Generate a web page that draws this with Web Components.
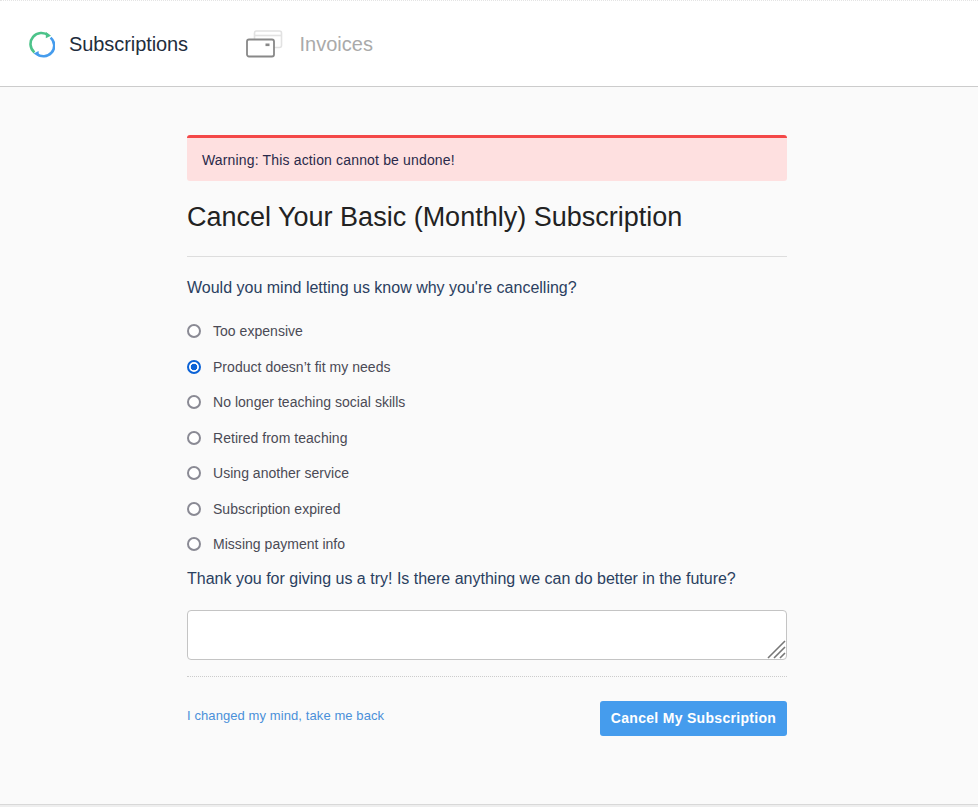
<!DOCTYPE html>
<html>
<head>
<meta charset="utf-8">
<style>
  html, body { margin: 0; padding: 0; }
  body { background: #fafafa; font-family: "Liberation Sans", Arial, sans-serif; }
</style>
</head>
<body>
<app-header>
  <nav-tab active>
    <svg slot="icon" width="26" height="27" viewBox="0 0 26 27" fill="none" stroke-width="2.6">
      <path d="M5.4 21.4A10.4 10.4 0 0 1 19.6 4.6" stroke="#4cc38a"/>
      <path d="M17 1 22 4.7 16.8 7.2Z" fill="#4cc38a" stroke="none"/>
      <path d="M21.6 6.6A10.4 10.4 0 0 1 7.4 22.6" stroke="#459ced"/>
      <path d="M9.8 25.8 4.6 22.4 9.6 20Z" fill="#459ced" stroke="none"/>
    </svg>
    Subscriptions
  </nav-tab>
  <nav-tab>
    <svg slot="icon" width="38" height="28" viewBox="0 0 38 28" fill="none">
      <rect x="8.5" y="1" width="27" height="16.5" rx="2" stroke="#e2e2e2" stroke-width="1.6" fill="#fff"/>
      <path d="M9 5.5h26" stroke="#e2e2e2" stroke-width="1.6"/>
      <rect x="1" y="9.5" width="27" height="17" rx="2" stroke="#888" stroke-width="1.8" fill="#fff"/>
      <rect x="19.5" y="13.5" width="4" height="2.6" fill="#888"/>
    </svg>
    Invoices
  </nav-tab>
</app-header>
<cancel-form>
  <warning-alert>Warning: This action cannot be undone!</warning-alert>
  <form-title>Cancel Your Basic (Monthly) Subscription</form-title>
  <form-question>Would you mind letting us know why you're cancelling?</form-question>
  <reason-list>
    <reason-option>Too expensive</reason-option>
    <reason-option checked>Product doesn’t fit my needs</reason-option>
    <reason-option>No longer teaching social skills</reason-option>
    <reason-option>Retired from teaching</reason-option>
    <reason-option>Using another service</reason-option>
    <reason-option>Subscription expired</reason-option>
    <reason-option>Missing payment info</reason-option>
  </reason-list>
  <form-question tight>Thank you for giving us a try! Is there anything we can do better in the future?</form-question>
  <feedback-box></feedback-box>
  <form-actions></form-actions>
</cancel-form>
<page-footer></page-footer>

<script>
class AppHeader extends HTMLElement {
  constructor() {
    super()
    this.attachShadow({mode: 'open'}).innerHTML = `
    <style>
      :host {
        display: flex;
        height: 84px;
        padding: 1px 0 0 29px;
        gap: 57.5px;
        align-items: center;
        background: #fff;
        border-top: 1px dotted #e4e4e4;
        border-bottom: 1px solid #ccc;
      }
    </style>
    <slot></slot>`
  }
}

class NavTab extends HTMLElement {
  constructor() {
    super()
    this.attachShadow({mode: 'open'}).innerHTML = `
    <style>
      :host {
        display: flex;
        align-items: center;
        gap: 16px;
        font-size: 20px;
        color: #aaa;
      }
      :host([active]) { color: #1f2d3d; gap: 14px; letter-spacing: -.08px; }
    </style>
    <slot name="icon"></slot><slot></slot>`
  }
}

class CancelForm extends HTMLElement {
  constructor() {
    super()
    this.attachShadow({mode: 'open'}).innerHTML = `
    <style>
      :host {
        display: block;
        box-sizing: border-box;
        width: 600px;
        margin-left: 187px;
        padding-top: 48px;
        height: 717px;
      }
    </style>
    <slot></slot>`
  }
}

class WarningAlert extends HTMLElement {
  constructor() {
    super()
    this.attachShadow({mode: 'open'}).innerHTML = `
    <style>
      :host {
        display: block;
        box-sizing: border-box;
        height: 46px;
        padding: 14px 15px 0;
        background: #fee0e0;
        border-top: 3px solid #f44848;
        border-radius: 3px;
        font-size: 14px;
        line-height: 16px;
        letter-spacing: .16px;
        color: #2a2a4a;
      }
    </style>
    <slot></slot>`
  }
}

class FormTitle extends HTMLElement {
  constructor() {
    super()
    this.attachShadow({mode: 'open'}).innerHTML = `
    <style>
      :host {
        display: block;
        box-sizing: border-box;
        height: 76px;
        padding-top: 20px;
        font-size: 27px;
        line-height: 32px;
        color: #222;
        border-bottom: 1px solid #ddd;
      }
    </style>
    <slot></slot>`
  }
}

class FormQuestion extends HTMLElement {
  constructor() {
    super()
    this.attachShadow({mode: 'open'}).innerHTML = `
    <style>
      :host {
        display: block;
        padding-top: 21px;
        font-size: 16px;
        line-height: 20px;
        color: #2a4060;
      }
      :host([tight]) { padding-top: 0; }
    </style>
    <slot></slot>`
  }
}

class ReasonList extends HTMLElement {
  constructor() {
    super()
    this.attachShadow({mode: 'open'}).innerHTML = `
    <style>
      :host {
        display: flex;
        flex-direction: column;
        padding: 15.5px 0 6.5px;
      }
    </style>
    <slot></slot>`
  }
}

class ReasonOption extends HTMLElement {
  connectedCallback() {
    if (this.shadowRoot) return
    this.attachShadow({mode: 'open'}).innerHTML = `
    <style>
      :host {
        display: flex;
        align-items: center;
        height: 35.5px;
        font-size: 14px;
        letter-spacing: .03px;
        color: #4a4a55;
      }
      input {
        appearance: none;
        box-sizing: border-box;
        width: 14px;
        height: 14px;
        margin: 0 12px 0 0;
        border: 2px solid #8a8a94;
        border-radius: 50%;
        background: #fff;
      }
      input:checked {
        border-color: #0b62d6;
        background: radial-gradient(circle, #0b62d6 0 3px, #fff 3.6px);
      }
    </style>
    <input type="radio" name="reason" ${this.hasAttribute('checked') ? 'checked' : ''}>
    <slot></slot>`
  }
}

class FeedbackBox extends HTMLElement {
  constructor() {
    super()
    this.attachShadow({mode: 'open'}).innerHTML = `
    <style>
      :host { display: block; position: relative; padding-top: 21px; }
      textarea {
        display: block;
        box-sizing: border-box;
        width: 600px;
        height: 50px;
        background: #fff;
        border: 1px solid #c4c4c4;
        border-radius: 4px;
        resize: none;
      }
      svg { position: absolute; right: 1px; bottom: 1px; }
    </style>
    <textarea></textarea>
    <svg width="19" height="19" viewBox="0 0 19 19" stroke="#777" stroke-width="1.6">
      <path d="M1 18 18 1M7 18 18 7M13 18 18 13"/>
    </svg>`
  }
}

class FormActions extends HTMLElement {
  constructor() {
    super()
    this.attachShadow({mode: 'open'}).innerHTML = `
    <style>
      :host {
        display: flex;
        justify-content: space-between;
        margin-top: 16px;
        padding-top: 24px;
        border-top: 1px dotted #ccc;
      }
      a {
        margin-top: 7px;
        font-size: 13px;
        line-height: 16px;
        letter-spacing: .09px;
        color: #4a90d9;
        text-decoration: none;
      }
      button {
        width: 187px;
        height: 35px;
        padding: 0;
        border: 0;
        border-radius: 3px;
        background: #459ced;
        color: #fff;
        font: bold 14px "Liberation Sans", Arial, sans-serif;
        letter-spacing: .3px;
      }
    </style>
    <a href="#">I changed my mind, take me back</a>
    <button type="button">Cancel My Subscription</button>`
  }
}

class PageFooter extends HTMLElement {
  constructor() {
    super()
    this.attachShadow({mode: 'open'}).innerHTML = `
    <style>
      :host {
        display: block;
        height: 2px;
        background: #eee;
        border-top: 1px solid #d8d8d8;
      }
    </style>`
  }
}

customElements.define('app-header', AppHeader)
customElements.define('nav-tab', NavTab)
customElements.define('cancel-form', CancelForm)
customElements.define('warning-alert', WarningAlert)
customElements.define('form-title', FormTitle)
customElements.define('form-question', FormQuestion)
customElements.define('reason-list', ReasonList)
customElements.define('reason-option', ReasonOption)
customElements.define('feedback-box', FeedbackBox)
customElements.define('form-actions', FormActions)
customElements.define('page-footer', PageFooter)
</script>
</body>
</html>
